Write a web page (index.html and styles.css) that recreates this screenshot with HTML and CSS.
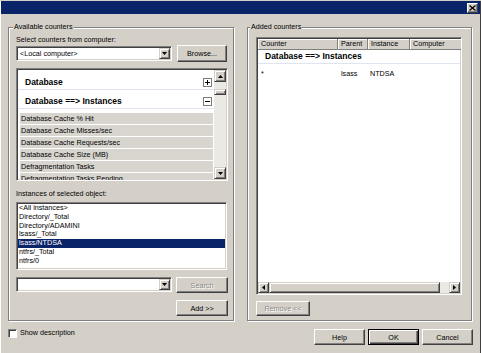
FILE: index.html
```html
<!DOCTYPE html>
<html lang="en">
<head>
  <meta charset="UTF-8" />
  <meta name="viewport" content="width=device-width, initial-scale=1.0" />
  <title>Add Counters</title>
  <link rel="stylesheet" href="styles.css">
</head>
<body>
  <div class="window">
    <div class="titlebar">
      <button class="close" title="Close">
        <svg width="7" height="6" viewBox="0 0 7 6"><path d="M0.5 0.5 L6.5 5.5 M6.5 0.5 L0.5 5.5" stroke="#000" stroke-width="1.3" fill="none"/></svg>
      </button>
    </div>

    <div class="panes">
      <fieldset class="group left">
        <legend>Available counters</legend>
        <div class="label">Select counters from computer:</div>
        <div class="row">
          <div class="combo">
            <span class="combo-text">&lt;Local computer&gt;</span>
            <span class="drop"><svg width="5" height="3" viewBox="0 0 5 3"><polygon points="0,0 5,0 2.5,3" fill="#000"/></svg></span>
          </div>
          <button class="btn browse">Browse...</button>
        </div>

        <div class="counters sunken">
          <div class="counter-items">
            <div class="cat">
              <span>Database</span>
              <svg width="9" height="9" viewBox="0 0 9 9"><rect x="0.5" y="0.5" width="8" height="8" fill="#fff" stroke="#7b7b7b"/><path d="M2 4.5 H7 M4.5 2 V7" stroke="#000"/></svg>
            </div>
            <div class="cat">
              <span>Database ==&gt; Instances</span>
              <svg width="9" height="9" viewBox="0 0 9 9"><rect x="0.5" y="0.5" width="8" height="8" fill="#fff" stroke="#7b7b7b"/><path d="M2 4.5 H7" stroke="#000"/></svg>
            </div>
            <div class="items">
              <div class="item">Database Cache % Hit</div>
              <div class="item">Database Cache Misses/sec</div>
              <div class="item">Database Cache Requests/sec</div>
              <div class="item">Database Cache Size (MB)</div>
              <div class="item">Defragmentation Tasks</div>
              <div class="item">Defragmentation Tasks Pending</div>
            </div>
          </div>
          <div class="vscroll">
            <span class="sbtn"><svg width="5" height="3" viewBox="0 0 5 3"><polygon points="0,3 5,3 2.5,0" fill="#000"/></svg></span>
            <span class="track top"></span>
            <span class="thumb"></span>
            <span class="track"></span>
            <span class="sbtn"><svg width="5" height="3" viewBox="0 0 5 3"><polygon points="0,0 5,0 2.5,3" fill="#000"/></svg></span>
          </div>
        </div>

        <div class="label spaced">Instances of selected object:</div>
        <ul class="instances sunken">
          <li>&lt;All instances&gt;</li>
          <li>Directory/_Total</li>
          <li>Directory/ADAMINI</li>
          <li>lsass/_Total</li>
          <li class="selected">lsass/NTDSA</li>
          <li>ntfrs/_Total</li>
          <li>ntfrs/0</li>
        </ul>

        <div class="row search-row">
          <div class="combo">
            <span class="combo-text"></span>
            <span class="drop"><svg width="5" height="3" viewBox="0 0 5 3"><polygon points="0,0 5,0 2.5,3" fill="#000"/></svg></span>
          </div>
          <button class="btn search" disabled>Search</button>
        </div>
        <div class="row add-row">
          <button class="btn add">Add &gt;&gt;</button>
        </div>
      </fieldset>

      <fieldset class="group right">
        <legend>Added counters</legend>
        <div class="added sunken">
          <div class="header">
            <span class="col c1">Counter</span>
            <span class="col c2">Parent</span>
            <span class="col c3">Instance</span>
            <span class="col c4">Computer</span>
          </div>
          <div class="added-cat">Database ==&gt; Instances</div>
          <div class="added-row">
            <span class="c1">*</span>
            <span class="c2">lsass</span>
            <span class="c3">NTDSA</span>
            <span class="c4"></span>
          </div>
          <div class="fill"></div>
          <div class="hscroll">
            <span class="sbtn"><svg width="3" height="5" viewBox="0 0 3 5"><polygon points="3,0 3,5 0,2.5" fill="#000"/></svg></span>
            <span class="thumb wide"></span>
            <span class="track"></span>
            <span class="sbtn"><svg width="3" height="5" viewBox="0 0 3 5"><polygon points="0,0 0,5 3,2.5" fill="#000"/></svg></span>
          </div>
        </div>
        <button class="btn remove" disabled>Remove &lt;&lt;</button>
      </fieldset>
    </div>

    <div class="footer">
      <label class="check"><span class="box"></span>Show description</label>
      <div class="actions">
        <button class="btn">Help</button>
        <button class="btn default">OK</button>
        <button class="btn">Cancel</button>
      </div>
    </div>
  </div>
</body>
</html>
```

FILE: styles.css
```css
    body {
      margin: 0;
      background: #d4d0c8;
      font-family: 'Liberation Sans', Arial, sans-serif;
      font-size: 7.2px;
      color: #000;
    }

    .window {
      width: 481px;
      height: 353px;
      box-sizing: border-box;
      box-shadow: inset -1px -1px #404040, inset 1px 1px #fff;
    }

    .titlebar {
      height: 13px;
      margin: 1px 1px 0 1px;
      background: #0a246a;
      display: flex;
      justify-content: flex-end;
      align-items: flex-start;
      padding: 2px 2px 0 0;
      box-sizing: border-box;
    }

    .close {
      width: 11px;
      height: 10px;
      padding: 0;
      background: #d4d0c8;
      border: 1px solid;
      border-color: #fff #404040 #404040 #fff;
      box-shadow: inset -1px -1px #808080;
      display: flex;
      align-items: center;
      justify-content: center;
    }

    .panes {
      display: flex;
      gap: 13px;
      padding-left: 8px;
      margin-top: 8px;
    }

    /* etched group boxes */
    .group {
      margin: 0;
      border: 1px solid #808080;
      box-shadow: 1px 1px 0 #fff, inset 1px 1px 0 #fff;
      display: flex;
      flex-direction: column;
      min-width: 0;
    }

    .group legend {
      line-height: 10px;
      padding: 0 1px;
      background: #d4d0c8;
    }

    .group.left {
      width: 226px;
      box-sizing: border-box;
      padding: 3px 5px 4px 7px;
    }

    .group.left legend {
      margin-left: -3px;
    }

    .group.right {
      width: 225px;
      box-sizing: border-box;
      padding: 3px 9px 4px 8px;
    }

    .group.right legend {
      margin-left: -6px;
    }

    .label {
      line-height: 9px;
    }

    .label.spaced {
      margin-top: 8px;
    }

    .row {
      display: flex;
      align-items: center;
      height: 17px;
      margin-top: 1px;
    }

    /* classic 3d bits */
    .sunken {
      border: 1px solid;
      border-color: #808080 #fff #fff #808080;
      padding: 1px;
      box-shadow: inset 1px 1px #404040, inset -1px -1px #d4d0c8;
      background: #fff;
      box-sizing: border-box;
    }

    .btn {
      font-family: inherit;
      font-size: 7.2px;
      padding: 0;
      background: #d4d0c8;
      color: #000;
      border: 1px solid;
      border-color: #fff #404040 #404040 #fff;
      box-shadow: inset -1px -1px #808080;
      box-sizing: border-box;
    }

    .btn:disabled {
      color: #8c8c8c;
      text-shadow: 1px 1px #fff;
    }

    .btn.default {
      border-color: #000;
      box-shadow: inset 1px 1px #fff, inset -1px -1px #404040, inset -2px -2px #808080;
    }

    .combo {
      width: 156px;
      height: 15px;
      display: flex;
      align-items: stretch;
      border: 1px solid;
      border-color: #808080 #fff #fff #808080;
      padding: 1px;
      box-shadow: inset 1px 1px #404040, inset -1px -1px #d4d0c8;
      background: #fff;
      box-sizing: border-box;
    }

    .combo-text {
      flex: 1;
      padding-left: 2px;
      line-height: 11px;
    }

    .drop, .sbtn {
      background: #d4d0c8;
      border: 1px solid;
      border-color: #d4d0c8 #404040 #404040 #d4d0c8;
      box-shadow: inset 1px 1px #fff, inset -1px -1px #808080;
      box-sizing: border-box;
      display: flex;
      align-items: center;
      justify-content: center;
    }

    .drop {
      width: 11px;
    }

    .browse {
      margin-left: 5px;
      width: 50px;
      height: 17px;
    }

    /* counter list */
    .counters {
      margin-top: 6px;
      height: 113px;
      display: flex;
      overflow: hidden;
    }

    .counter-items {
      flex: 1;
    }

    .cat {
      display: flex;
      justify-content: space-between;
      align-items: center;
      font-weight: bold;
      font-size: 8.5px;
      line-height: 10px;
      padding: 6px 2px 2px 7px;
      border-bottom: 1px solid #dfe5ee;
    }

    .cat:first-child {
      padding-top: 7px;
    }

    .items {
      margin-top: 4px;
      padding: 0 1px 0 2px;
    }

    .item {
      height: 11px;
      line-height: 11px;
      margin-bottom: 1px;
      padding-left: 1px;
      background: #d8d5cf;
      white-space: nowrap;
      overflow: hidden;
    }

    .vscroll {
      width: 12px;
      display: flex;
      flex-direction: column;
      background: #ebe9e4;
    }

    .vscroll .sbtn {
      height: 12px;
    }

    .vscroll .track.top {
      height: 7px;
      flex: none;
    }

    .track {
      flex: 1;
    }

    .thumb {
      background: #d4d0c8;
      border: 1px solid;
      border-color: #d4d0c8 #404040 #404040 #d4d0c8;
      box-shadow: inset 1px 1px #fff, inset -1px -1px #808080;
      box-sizing: border-box;
    }

    .vscroll .thumb {
      height: 6px;
    }

    /* instances */
    .instances {
      list-style: none;
      margin: 4px 1px 0 0;
      height: 68px;
      overflow: hidden;
    }

    .instances li {
      line-height: 8.8px;
      height: 8.8px;
      padding-left: 1px;
    }

    .instances li.selected {
      background: #0a246a;
      color: #fff;
    }

    .search-row {
      margin-top: 7px;
      height: 16px;
      align-items: flex-start;
    }

    .search {
      margin-left: 4px;
      width: 52px;
      height: 16px;
    }

    .add-row {
      margin-top: 7px;
      height: 16px;
      justify-content: flex-end;
    }

    .add {
      width: 52px;
      height: 16px;
    }

    /* added counters list */
    .added {
      margin-top: 2px;
      flex: 1;
      display: flex;
      flex-direction: column;
      overflow: hidden;
    }

    .header, .added-row {
      display: flex;
      white-space: nowrap;
    }

    .c1 { width: 80px; flex: none; }
    .c2 { width: 30px; flex: none; }
    .c3 { width: 42px; flex: none; }
    .c4 { width: 52px; flex: none; }

    .col {
      height: 11px;
      line-height: 10px;
      padding-left: 3px;
      box-sizing: border-box;
      background: #d4d0c8;
      border-right: 1px solid #808080;
      border-bottom: 1px solid #808080;
      box-shadow: inset 1px 1px #fff;
      overflow: hidden;
    }

    .added-cat {
      font-weight: bold;
      font-size: 8.5px;
      line-height: 13px;
      padding-left: 7px;
      border-bottom: 1px solid #dfe5ee;
    }

    .added-row {
      padding-top: 5px;
      line-height: 9px;
    }

    .added-row span {
      padding-left: 3px;
      box-sizing: border-box;
    }

    .added-row .c3 {
      padding-left: 2px;
    }

    .fill {
      flex: 1;
    }

    .hscroll {
      height: 11px;
      display: flex;
      background: #ebe9e4;
    }

    .hscroll .sbtn {
      width: 11px;
    }

    .hscroll .thumb.wide {
      width: 171px;
    }

    .remove {
      margin-top: 6px;
      width: 54px;
      height: 15px;
    }

    /* bottom bar */
    .footer {
      display: flex;
      justify-content: space-between;
      align-items: flex-start;
      padding: 8px 8px 0 8px;
    }

    .check {
      display: flex;
      align-items: center;
      gap: 3px;
      margin-top: -1px;
      line-height: 10px;
    }

    .check .box {
      width: 9px;
      height: 9px;
      background: #fff;
      border: 1px solid;
      border-color: #808080 #fff #fff #808080;
      box-shadow: inset 1px 1px #404040;
      box-sizing: border-box;
    }

    .actions {
      display: flex;
      gap: 3px;
    }

    .actions .btn {
      width: 51px;
      height: 16px;
    }
```
